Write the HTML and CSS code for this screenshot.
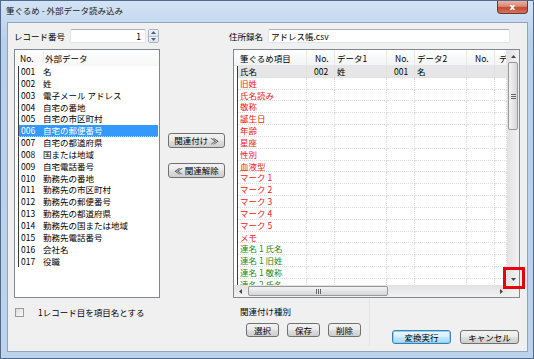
FILE: index.html
```
<!DOCTYPE html>
<html lang="ja">
<head>
    <meta charset="UTF-8">
    <title>筆ぐるめ - 外部データ読み込み</title>
    <link rel="stylesheet" href="styles.css">
</head>
<body>
    <div class="window">
        <div class="titlebar">
            <span class="title">筆ぐるめ - 外部データ読み込み</span>
            <button class="close">x</button>
        </div>

        <div class="client">
            <div class="left-pane">
                <div class="field-row">
                    <span class="record-label">レコード番号</span>
                    <div class="textbox record-input">1</div>
                    <div class="spin">
                        <span class="spin-btn"><svg width="5" height="3" viewBox="0 0 5 3"><path d="M0 3 L2.5 0 L5 3 Z" fill="#4d6185"/></svg></span>
                        <span class="spin-btn"><svg width="5" height="3" viewBox="0 0 5 3"><path d="M0 0 L2.5 3 L5 0 Z" fill="#4d6185"/></svg></span>
                    </div>
                </div>

                <div class="list">
                    <div class="list-header">
                        <span class="lh-no">No.</span>
                        <span class="lh-name">外部データ</span>
                    </div>
                    <div class="list-row"><span class="no">001</span><span>名</span></div>
                    <div class="list-row"><span class="no">002</span><span>姓</span></div>
                    <div class="list-row"><span class="no">003</span><span>電子メール アドレス</span></div>
                    <div class="list-row"><span class="no">004</span><span>自宅の番地</span></div>
                    <div class="list-row"><span class="no">005</span><span>自宅の市区町村</span></div>
                    <div class="list-row selected"><span class="no">006</span><span>自宅の郵便番号</span></div>
                    <div class="list-row"><span class="no">007</span><span>自宅の都道府県</span></div>
                    <div class="list-row"><span class="no">008</span><span>国または地域</span></div>
                    <div class="list-row"><span class="no">009</span><span>自宅電話番号</span></div>
                    <div class="list-row"><span class="no">010</span><span>勤務先の番地</span></div>
                    <div class="list-row"><span class="no">011</span><span>勤務先の市区町村</span></div>
                    <div class="list-row"><span class="no">012</span><span>勤務先の郵便番号</span></div>
                    <div class="list-row"><span class="no">013</span><span>勤務先の都道府県</span></div>
                    <div class="list-row"><span class="no">014</span><span>勤務先の国または地域</span></div>
                    <div class="list-row"><span class="no">015</span><span>勤務先電話番号</span></div>
                    <div class="list-row"><span class="no">016</span><span>会社名</span></div>
                    <div class="list-row"><span class="no">017</span><span>役職</span></div>
                </div>

                <label class="check-row">
                    <span class="checkbox"></span>
                    <span>1レコード目を項目名とする</span>
                </label>
            </div>

            <div class="mid-pane">
                <button class="btn">関連付け ≫</button>
                <button class="btn">≪ 関連解除</button>
            </div>

            <div class="right-pane">
                <div class="field-row">
                    <span class="book-label">住所録名</span>
                    <div class="textbox book-input">アドレス帳.csv</div>
                </div>

                <div class="grid">
                    <div class="grid-body">
                        <div class="grid-header">
                            <span class="c1">筆ぐるめ項目</span>
                            <span class="c2">No.</span>
                            <span class="c3">データ1</span>
                            <span class="c2">No.</span>
                            <span class="c3">データ2</span>
                            <span class="c2">No.</span>
                            <span class="c7">デ</span>
                        </div>
                        <div id="gridRows"></div>
                    </div>
                    <div class="vscroll">
                        <span class="arrow"><svg width="5" height="3" viewBox="0 0 5 3"><path d="M0 3 L2.5 0 L5 3 Z" fill="#444"/></svg></span>
                        <span class="vthumb"><span class="grip-v"></span></span>
                        <span class="fill"></span>
                        <span class="arrow"><svg width="5" height="3" viewBox="0 0 5 3"><path d="M0 0 L2.5 3 L5 0 Z" fill="#444"/></svg></span>
                    </div>
                    <div class="hscroll">
                        <span class="arrow"><svg width="3" height="5" viewBox="0 0 3 5"><path d="M3 0 L0 2.5 L3 5 Z" fill="#444"/></svg></span>
                        <span class="hthumb"><span class="grip-h"></span></span>
                        <span class="fill"></span>
                        <span class="arrow"><svg width="3" height="5" viewBox="0 0 3 5"><path d="M0 0 L3 2.5 L0 5 Z" fill="#444"/></svg></span>
                    </div>
                    <div class="corner"></div>
                </div>

                <div class="bottom">
                    <div class="link-group">
                        <div class="group-title">関連付け種別</div>
                        <div class="group-buttons">
                            <button class="btn small">選択</button>
                            <button class="btn small">保存</button>
                            <button class="btn small">削除</button>
                        </div>
                    </div>
                    <div class="actions">
                        <button class="btn wide default">変換実行</button>
                        <button class="btn wide">キャンセル</button>
                    </div>
                </div>
            </div>
        </div>

        <!-- 注目枠 -->
        <div class="highlight"></div>
    </div>

    <script>
        const items = [
            { name: '氏名', n1: '002', d1: '姓', n2: '001', d2: '名', type: 'current' },
            { name: '旧姓', type: 'red' },
            { name: '氏名読み', type: 'red' },
            { name: '敬称', type: 'red' },
            { name: '誕生日', type: 'red' },
            { name: '年齢', type: 'red' },
            { name: '星座', type: 'red' },
            { name: '性別', type: 'red' },
            { name: '血液型', type: 'red' },
            { name: 'マーク 1', type: 'red' },
            { name: 'マーク 2', type: 'red' },
            { name: 'マーク 3', type: 'red' },
            { name: 'マーク 4', type: 'red' },
            { name: 'マーク 5', type: 'red' },
            { name: 'メモ', type: 'red' },
            { name: '連名 1 氏名', type: 'green' },
            { name: '連名 1 旧姓', type: 'green' },
            { name: '連名 1 敬称', type: 'green' },
            { name: '連名 2 氏名', type: 'green' }
        ];

        const rowsDiv = document.getElementById('gridRows');
        items.forEach(item => {
            const row = document.createElement('div');
            row.classList.add('grid-row', item.type);
            const cells = [
                ['c1', item.name],
                ['c2', item.n1 || ''],
                ['c3', item.d1 || ''],
                ['c2', item.n2 || ''],
                ['c3', item.d2 || ''],
                ['c2', ''],
                ['c7', '']
            ];
            cells.forEach(([cls, text]) => {
                const cell = document.createElement('span');
                cell.classList.add(cls);
                cell.textContent = text;
                row.appendChild(cell);
            });
            rowsDiv.appendChild(row);
        });
    </script>
</body>
</html>
```

FILE: styles.css
```
* {
    box-sizing: border-box;
}

body {
    margin: 0;
    font-family: "Noto Sans CJK JP", "Liberation Sans", sans-serif;
    font-size: 8.5px;
    color: #000;
    background: #fff;
}

button {
    font-family: inherit;
    font-size: inherit;
}

.window {
    position: relative;
    width: 534px;
    height: 359px;
    background: linear-gradient(#d3e3f5, #b9d0ea 40px, #bdd3ec);
    border: 1px solid #4f6a8c;
    padding: 0 5px 6px 6px;
    display: flex;
    flex-direction: column;
}

.titlebar {
    height: 21px;
    display: flex;
    align-items: flex-start;
}

.title {
    margin: 3px 0 0 -1px;
    line-height: 12px;
    color: #1a1a1a;
}

.close {
    margin-left: auto;
    width: 31px;
    height: 13px;
    padding: 0;
    border: 1px solid #76352a;
    border-top: none;
    border-radius: 0 0 4px 4px;
    background: linear-gradient(#eab3a5, #d98672 45%, #c4492f 55%, #d37760);
    color: #fff;
    font-family: "DejaVu Sans", sans-serif;
    font-weight: bold;
    font-size: 9px;
    line-height: 11px;
}

.client {
    flex: 1;
    display: flex;
    background: #f0f0f0;
    border: 1px solid #8fa5bf;
    padding: 6px 7px 0 6px;
}

/* 左側 */
.left-pane {
    width: 146px;
    display: flex;
    flex-direction: column;
}

.field-row {
    display: flex;
    align-items: center;
    height: 14px;
}

.record-label {
    width: 56px;
}

.textbox {
    height: 14px;
    background: #fff;
    border: 1px solid #dfe4ea;
    border-top-color: #abadb3;
    border-radius: 2px;
    line-height: 12px;
    padding: 0 4px;
}

.record-input {
    width: 76px;
    text-align: right;
}

.spin {
    margin-left: 2px;
    width: 11px;
    height: 14px;
    display: flex;
    flex-direction: column;
    border: 1px solid #a9b4c2;
    border-radius: 2px;
}

.spin-btn {
    flex: 1;
    display: flex;
    align-items: center;
    justify-content: center;
    background: linear-gradient(#f4f6f9, #dde4ec);
}

.spin-btn + .spin-btn {
    border-top: 1px solid #b5c0cc;
}

.list {
    margin-top: 6px;
    height: 249px;
    background: #fff;
    border: 1px solid #828790;
}

.list-header {
    height: 16px;
    display: flex;
    align-items: center;
    background: linear-gradient(#fff, #f6f7f8);
}

.lh-no {
    width: 29px;
    padding-left: 5px;
    border-right: 1px solid #eceef1;
}

.lh-name {
    padding-left: 1px;
}

.list-row {
    height: 11.85px;
    line-height: 11.85px;
    margin: 0 1px 0 3px;
    border-left: 1px solid #3a3a3a;
    display: flex;
    white-space: nowrap;
}

.list-row .no {
    width: 24px;
    padding-left: 2px;
}

.list-row.selected {
    background: #3399ff;
    color: #fff;
    border-bottom: 1px dotted #bcdcff;
}

.check-row {
    margin-top: 9px;
    height: 10px;
    display: flex;
    align-items: center;
}

.checkbox {
    width: 9px;
    height: 9px;
    margin: 0 14px 0 1px;
    border: 1px solid #9a9a9a;
    background: linear-gradient(135deg, #dcdcdc, #fafafa);
}

/* 中央のボタン */
.mid-pane {
    width: 57px;
    margin-left: 8px;
    padding-top: 104px;
    display: flex;
    flex-direction: column;
    gap: 15px;
}

.btn {
    height: 15px;
    padding: 0;
    border: 1px solid #707070;
    border-radius: 3px;
    background: linear-gradient(#f2f2f2, #ebebeb 45%, #dddddd 55%, #cfcfcf);
    color: #000;
    line-height: 13px;
    white-space: nowrap;
}

/* 右側 */
.right-pane {
    width: 291px;
    margin-left: 4px;
    display: flex;
    flex-direction: column;
}

.book-label {
    width: 39px;
}

.book-input {
    width: 242px;
    padding-left: 2px;
}

.grid {
    margin: 6px 0 0 4px;
    width: 287px;
    height: 249px;
    border: 1px solid #828790;
    background: #fff;
    display: grid;
    grid-template-columns: 1fr 12px;
    grid-template-rows: 1fr 12px;
}

.grid-body {
    overflow: hidden;
}

.grid-header {
    height: 16px;
    display: flex;
    align-items: center;
    background: linear-gradient(#fff, #f3f4f6);
    border-bottom: 1px solid #e3e5e8;
}

.grid-header span {
    height: 16px;
    line-height: 16px;
    border-right: 1px solid #e6e8eb;
    white-space: nowrap;
    overflow: hidden;
}

.grid-header .c1 {
    width: 73px;
    padding-left: 6px;
}

.grid-header .c2 {
    padding-left: 8px;
}

.grid-row {
    height: 11.83px;
    line-height: 11.5px;
    margin-left: 3px;
    display: flex;
    border-left: 1px solid #3a3a3a;
}

.grid-row span {
    border-right: 1px dotted #dcdcdc;
    border-bottom: 1px dotted #dcdcdc;
    white-space: nowrap;
    overflow: hidden;
}

.c1 {
    width: 69px;
    padding-left: 2px;
}

.c2 {
    width: 28px;
    padding-left: 7px;
}

.c3 {
    width: 52px;
    padding-left: 2px;
}

.c7 {
    width: 12px;
    padding-left: 4px;
}

.grid-row.current {
    background: #e6e6e6;
}

.grid-row.red {
    color: #f01818;
}

.grid-row.green {
    color: #1b8a1b;
}

.vscroll, .hscroll {
    display: flex;
    background: #eaeaea;
}

.vscroll {
    flex-direction: column;
    background: linear-gradient(90deg, #e2e2e2, #f2f2f2);
}

.hscroll {
    background: linear-gradient(#e2e2e2, #f2f2f2);
}

.arrow {
    width: 12px;
    height: 12px;
    display: flex;
    align-items: center;
    justify-content: center;
}

.fill {
    flex: 1;
}

.vthumb {
    margin: 0 1px;
    height: 68px;
    border: 1px solid #979797;
    border-radius: 2px;
    background: linear-gradient(90deg, #f4f4f4, #e6e6e6 50%, #d6d6d6);
    display: flex;
    align-items: center;
    justify-content: center;
}

.hthumb {
    margin: 1px 0 1px 2px;
    width: 140px;
    border: 1px solid #979797;
    border-radius: 2px;
    background: linear-gradient(#f4f4f4, #e6e6e6 50%, #d6d6d6);
    display: flex;
    align-items: center;
    justify-content: center;
}

.grip-v {
    width: 5px;
    height: 5px;
    background: repeating-linear-gradient(#666 0 1px, transparent 1px 2px);
}

.grip-h {
    width: 5px;
    height: 5px;
    background: repeating-linear-gradient(90deg, #666 0 1px, transparent 1px 2px);
}

.corner {
    background: #f0f0f0;
}

.bottom {
    flex: 1;
    display: flex;
}

.link-group {
    width: 141px;
    padding: 8px 0 0 11px;
    border-right: 1px solid #e4e4e4;
    margin-bottom: 5px;
}

.group-title {
    line-height: 10px;
}

.group-buttons {
    margin: 7px 0 0 6px;
    display: flex;
    gap: 8px;
}

.btn.small {
    width: 33px;
    height: 14px;
    line-height: 12px;
}

.actions {
    margin: 32px 1px 0 auto;
    display: flex;
    gap: 9px;
}

.btn.wide {
    width: 59px;
    height: 14px;
    line-height: 12px;
}

.btn.default {
    border-color: #3c7fb1;
    background: linear-gradient(#eaf6fd, #d9f0fc 45%, #bee6fd 55%, #a7d9f5);
    box-shadow: inset 0 0 0 1px #8fd0f2;
}

.highlight {
    position: absolute;
    left: 502px;
    top: 266px;
    width: 22px;
    height: 22px;
    border: 3px solid #e8000b;
}
```
